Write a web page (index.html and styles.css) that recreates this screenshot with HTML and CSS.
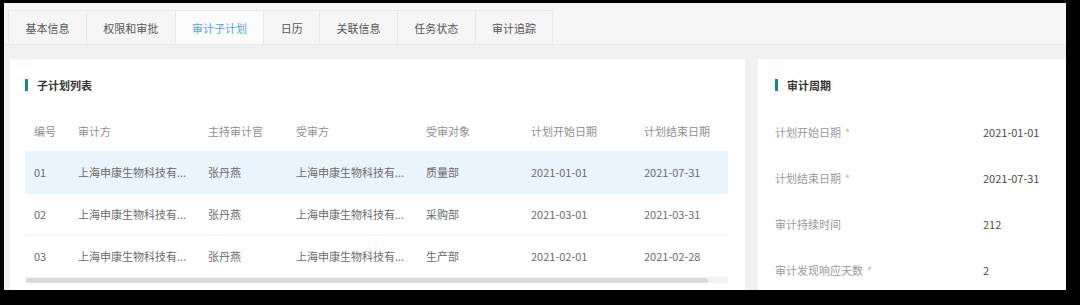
FILE: index.html
```html
<!DOCTYPE html>
<html lang="zh-CN">
<head>
<meta charset="utf-8">
<title>审计子计划</title>
<link rel="stylesheet" href="styles.css">
</head>
<body>
<div class="screen">
  <div class="tabbar">
    <div class="tab">基本信息</div>
    <div class="tab">权限和审批</div>
    <div class="tab active">审计子计划</div>
    <div class="tab">日历</div>
    <div class="tab">关联信息</div>
    <div class="tab">任务状态</div>
    <div class="tab">审计追踪</div>
  </div>
  <div class="content">
    <section class="panel main">
      <h3 class="ptitle">子计划列表</h3>
      <table class="grid">
        <colgroup>
          <col class="c1"><col class="c2"><col class="c3"><col class="c4"><col class="c5"><col class="c6"><col class="c7">
        </colgroup>
        <thead>
          <tr><th>编号</th><th>审计方</th><th>主持审计官</th><th>受审方</th><th>受审对象</th><th>计划开始日期</th><th>计划结束日期</th></tr>
        </thead>
        <tbody>
          <tr class="hl"><td>01</td><td>上海申康生物科技有...</td><td>张丹燕</td><td>上海申康生物科技有...</td><td>质量部</td><td>2021-01-01</td><td>2021-07-31</td></tr>
          <tr><td>02</td><td>上海申康生物科技有...</td><td>张丹燕</td><td>上海申康生物科技有...</td><td>采购部</td><td>2021-03-01</td><td>2021-03-31</td></tr>
          <tr><td>03</td><td>上海申康生物科技有...</td><td>张丹燕</td><td>上海申康生物科技有...</td><td>生产部</td><td>2021-02-01</td><td>2021-02-28</td></tr>
        </tbody>
      </table>
      <div class="scroll"><div class="thumb"></div></div>
    </section>
    <section class="panel side">
      <h3 class="ptitle">审计周期</h3>
      <div class="fields">
        <div class="field"><span class="label">计划开始日期<i class="req">*</i></span><span class="value">2021-01-01</span></div>
        <div class="field"><span class="label">计划结束日期<i class="req">*</i></span><span class="value">2021-07-31</span></div>
        <div class="field"><span class="label">审计持续时间</span><span class="value">212</span></div>
        <div class="field"><span class="label">审计发现响应天数<i class="req">*</i></span><span class="value">2</span></div>
      </div>
    </section>
  </div>
</div>
</body>
</html>
```

FILE: styles.css
```css
* { box-sizing: border-box; }
html, body { margin: 0; padding: 0; }
body {
  width: 1080px;
  height: 305px;
  background: #000;
  overflow: hidden;
  font-family: "Noto Sans CJK SC", "Microsoft YaHei", sans-serif;
  font-size: 11px;
}
.screen {
  margin: 3px 14px 0 4px;
  width: 1062px;
  height: 287px;
  overflow: hidden;
  background: #f0f0f0;
}
.tabbar {
  display: flex;
  height: 42px;
  padding: 7px 0 0 4px;
  background: #f6f6f6;
  border-bottom: 1px solid #e9e9e9;
}
.tab {
  height: 34px;
  padding: 0 16.4px;
  display: flex;
  align-items: center;
  color: #555;
  background: #f5f5f5;
  border: 1px solid #e8e8e8;
  border-bottom: none;
  border-left: none;
  white-space: nowrap;
}
.tab:first-child { border-left: 1px solid #e8e8e8; }
.tab:last-child { border-radius: 0 3px 0 0; }
.tab.active {
  color: #5a9fe6;
  background: #fbfbfb;
}
.content {
  display: flex;
  gap: 13px;
  padding: 14px 0 0 6px;
}
.panel {
  background: #fff;
  height: 240px;
}
.main {
  width: 735px;
  flex: none;
  padding: 18px 17px 0 15px;
}
.side {
  width: 308px;
  flex: none;
  padding: 18px 0 0 17px;
}
.ptitle {
  margin: 0;
  height: 16px;
  line-height: 16px;
  font-size: 11px;
  font-weight: bold;
  color: #333;
  display: flex;
  align-items: center;
}
.ptitle::before {
  content: "";
  width: 3px;
  height: 12px;
  background: #178592;
  margin-right: 9px;
}
.grid {
  margin-top: 17px;
  width: 703px;
  border-collapse: collapse;
  table-layout: fixed;
}
.c1 { width: 44px; }
.c2 { width: 130px; }
.c3 { width: 88px; }
.c4 { width: 130px; }
.c5 { width: 105px; }
.c6 { width: 113px; }
.c7 { width: 93px; }
.grid th, .grid td {
  padding: 0 0 0 9px;
  text-align: left;
  white-space: nowrap;
  overflow: hidden;
  font-weight: normal;
}
.grid th {
  height: 41px;
  color: #8f8f8f;
}
.grid td {
  height: 42px;
  color: #6a6a6a;
  border-bottom: 1px solid #f1f1f1;
}
.grid tr.hl td { background: #eaf4fd; border-bottom-color: #eaf4fd; }
.scroll {
  width: 703px;
  height: 5px;
  background: #f3f3f3;
}
.thumb {
  margin-left: 1px;
  width: 682px;
  height: 5px;
  background: #d9d9d9;
  border-radius: 3px;
}
.fields { margin-top: 16px; }
.field {
  display: flex;
  align-items: center;
  height: 46px;
}
.label {
  width: 208px;
  color: #999;
  white-space: nowrap;
}
.req {
  font-style: normal;
  color: #f29c9c;
  margin-left: 4px;
}
.value { color: #4a4a4a; }
```
